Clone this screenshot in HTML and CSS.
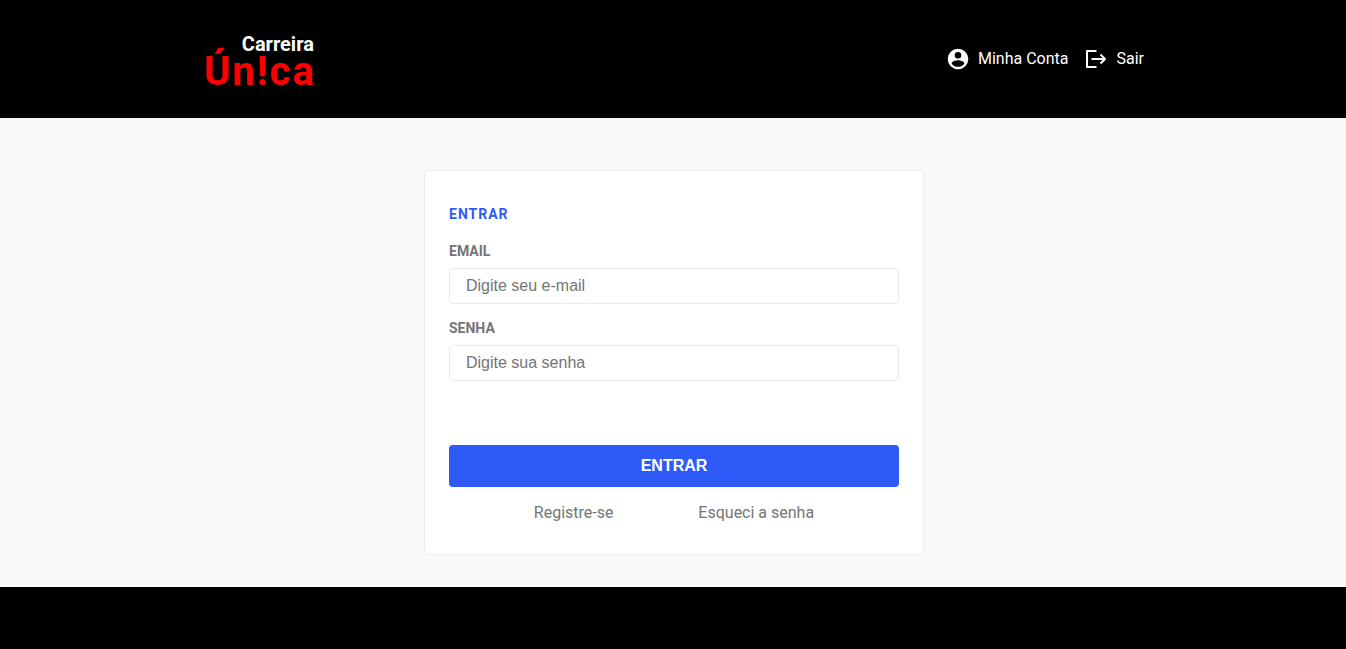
FILE: index.html
```html
<!DOCTYPE html>
<html lang="pt-BR">
<head>
<meta charset="utf-8">
<meta name="viewport" content="width=device-width, initial-scale=1">
<title>Carreira Única</title>
<link rel="stylesheet" href="styles.css">
</head>
<body>
<header class="header">
  <div class="header-inner">
    <a class="logo" href="#">
      <span class="logo-top">Carreira</span>
      <span class="logo-main">Ún!ca</span>
    </a>
    <nav class="nav">
      <a class="nav-link" href="#">
        <svg class="icon" viewBox="0 0 24 24" aria-hidden="true"><path fill="currentColor" d="M12 1.700a10.300 10.300 0 1 0 0 20.600 10.300 10.300 0 0 0 0-20.600zm0 3.300a3.300 3.300 0 1 1 0 6.600 3.300 3.300 0 0 1 0-6.600zm0 14.800c-2.700 0-5-1.300-6.400-3.400.1-2 4.300-3.200 6.400-3.200s6.300 1.200 6.400 3.200C17 18.500 14.700 19.800 12 19.800z"/></svg>
        <span>Minha Conta</span>
      </a>
      <a class="nav-link" href="#">
        <svg class="icon" viewBox="0 0 24 24" aria-hidden="true"><path fill="none" stroke="currentColor" stroke-width="2" stroke-linejoin="round" d="M12.500 4H3v16h9.500M7.500 12h13M16.500 7.500L21 12l-4.500 4.500"/></svg>
        <span>Sair</span>
      </a>
    </nav>
  </div>
</header>
<main class="main">
  <form class="card">
    <h1 class="title">ENTRAR</h1>
    <div class="field">
      <label class="label" for="email">EMAIL</label>
      <input class="input" id="email" type="email" placeholder="Digite seu e-mail">
    </div>
    <div class="field">
      <label class="label" for="senha">SENHA</label>
      <input class="input" id="senha" type="password" placeholder="Digite sua senha">
    </div>
    <button class="submit" type="submit">ENTRAR</button>
    <div class="links">
      <a class="link" href="#">Registre-se</a>
      <a class="link" href="#">Esqueci a senha</a>
    </div>
  </form>
</main>
<footer class="footer"></footer>
</body>
</html>
```

FILE: styles.css
```css
* {
  box-sizing: border-box;
}

body {
  margin: 0;
  min-height: 100vh;
  display: flex;
  flex-direction: column;
  background: #f9f9f9;
  color: #757575;
  font-family: Roboto, sans-serif;
  font-size: 16px;
  line-height: 24px;
}

a {
  color: inherit;
  text-decoration: none;
}

.header,
.main {
  padding-left: 16px;
  padding-right: 14px;
}

.header {
  padding-top: 31px;
  padding-bottom: 31px;
  background: #000;
  color: #fff;
}

.header-inner {
  max-width: 940px;
  margin: 0 auto;
  display: flex;
  align-items: center;
  justify-content: space-between;
}

.logo {
  display: flex;
  flex-direction: column;
  align-items: flex-end;
  font-weight: 700;
}

.logo-top {
  padding-right: 2px;
  font-size: 20px;
  line-height: 26px;
}

.logo-main {
  color: #f00;
  font-size: 40px;
  line-height: 30px;
  letter-spacing: 2px;
}

.nav {
  display: flex;
  gap: 16px;
}

.nav-link {
  display: flex;
  align-items: center;
  gap: 8px;
}

.icon {
  width: 24px;
  height: 24px;
}

.main {
  padding-top: 52px;
  padding-bottom: 32px;
}

.card {
  max-width: 500px;
  margin: 0 auto;
  padding: 30px 24px 29px;
  background: #fff;
  border: 1px solid #eee;
  border-radius: 4px;
}

.title {
  margin: 0;
  color: #2e5bf8;
  font-size: 14px;
  line-height: 26px;
  font-weight: 700;
  letter-spacing: 1px;
}

.field {
  margin-top: 13px;
}

.label {
  display: block;
  margin-bottom: 6px;
  font-size: 14px;
  line-height: 22px;
  font-weight: 700;
}

.input {
  display: block;
  width: 100%;
  height: 36px;
  padding: 0 16px;
  background: #fff;
  border: 1px solid #eaeaea;
  border-radius: 4px;
  font-family: "Liberation Sans", Arial, sans-serif;
  font-size: 16px;
}

.input::placeholder {
  color: #757575;
}

.submit {
  display: block;
  width: 100%;
  height: 42px;
  margin-top: 64px;
  padding: 0;
  background: #2e5bf8;
  color: #fff;
  border: 0;
  border-radius: 4px;
  font-family: "Liberation Sans", Arial, sans-serif;
  font-size: 16px;
  font-weight: 700;
}

.links {
  display: flex;
  justify-content: space-evenly;
  margin-top: 14px;
}

.footer {
  flex: 1;
  min-height: 62px;
  background: #000;
}
```
